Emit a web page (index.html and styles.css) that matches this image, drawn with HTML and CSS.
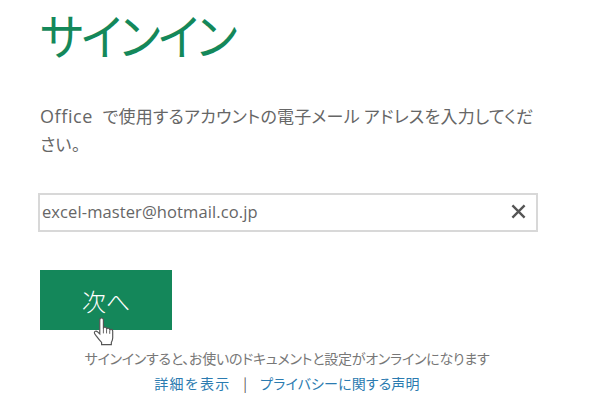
FILE: index.html
```html
<!DOCTYPE html>
<html lang="ja">
<head>
<meta charset="utf-8">
<title>サインイン</title>
<link rel="stylesheet" href="styles.css">
</head>
<body>
<main class="page">
  <h1 class="title">サインイン</h1>
  <p class="lead"><span class="latin">Office</span> で使用するアカウントの電子メール アドレスを入力してくだ<br>さい。</p>
  <div class="field">
    <span class="value">excel-master@hotmail.co.jp</span>
    <svg class="clear" viewBox="0 0 16 16" aria-hidden="true"><path d="M1.5 1.5 14.5 14.5M14.5 1.5 1.5 14.5"/></svg>
  </div>
  <div class="action">
    <button class="next" type="button">次へ</button>
    <svg class="cursor" viewBox="0 0 26 34" aria-hidden="true"><path d="M7.5 3.2c0-3 4-3 4 0v9.3c0-2 3.5-2 3.5.2v1c0-2 3.5-2 3.5.2v1c0-1.800 3.300-1.800 3.300.4v7.500c0 2.200-.6 3.700-1.500 5.200v2.500H9.500v-2.500c-2-2-3.500-4-5.500-6.700-1-1.300-2.500-2.800-2.500-4 0-1.700 2-2.300 3.300-1.200l2.700 2.500z"/><path class="crease" d="M11.500 12v6M15 13.500v4.500M18.500 15v3.500"/></svg>
  </div>
  <footer class="foot">
    <p class="note">サインインすると、お使いのドキュメントと設定がオンラインになります</p>
    <p class="links"><a class="detail" href="#">詳細を表示</a><span class="sep">|</span><a class="privacy" href="#">プライバシーに関する声明</a></p>
  </footer>
</main>
</body>
</html>
```
FILE: styles.css
```css
html, body { margin: 0; height: 100%; background: #fff; overflow: hidden; }
body { font-family: "Noto Sans CJK JP", "Noto Sans", sans-serif; font-feature-settings: "palt"; }
.page { width: 600px; height: 400px; padding-left: 40px; box-sizing: border-box; color: #666; }
.title { margin: 0; font-size: 46px; line-height: 68px; font-weight: 400; color: #14885a; letter-spacing: -2.200px; transform: scaleY(1.07); transform-origin: 0 50%; }
.lead { margin: 34px 0 0; width: 500px; font-size: 17px; line-height: 27px; letter-spacing: .25px; }
.latin { font-family: "Open Sans", sans-serif; font-size: 18px; letter-spacing: .6px; margin-right: 5.500px; }
.field { margin-top: 36px; margin-left: -2px; width: 500px; height: 39px; box-sizing: border-box; border: 2px solid #d8d8d8; display: flex; align-items: center; justify-content: space-between; padding: 0 10px 2px 2px; }
.value { font-family: "Open Sans", sans-serif; font-size: 16.500px; letter-spacing: .1px; color: #666; }
.clear { width: 15px; height: 15px; fill: none; stroke: #555; stroke-width: 2.500; }
.action { position: relative; margin-top: 38px; height: 60px; }
.next { display: block; width: 132px; height: 60px; padding: 0; border: 0; background: #14875a; color: #fff; font: 300 24px "Noto Sans CJK JP", sans-serif; font-feature-settings: normal; }
.cursor { position: absolute; left: 53px; top: 47px; width: 23.500px; height: 31px; fill: #fff; stroke: #555; stroke-width: 1.300; }
.crease { fill: none; stroke-width: 1; }
.foot { width: 494px; margin-top: 16px; text-align: center; font-size: 14px; }
.note, .links { margin: 0; }
.note { line-height: 24px; color: #777; letter-spacing: -.25px; }
.links { line-height: 26px; }
.links a { color: #2b7bb0; text-decoration: none; }
.links .detail { font-feature-settings: normal; letter-spacing: 1.200px; }
.links .privacy { letter-spacing: .15px; }
.sep { margin: 0 13px; color: #555; }
```
